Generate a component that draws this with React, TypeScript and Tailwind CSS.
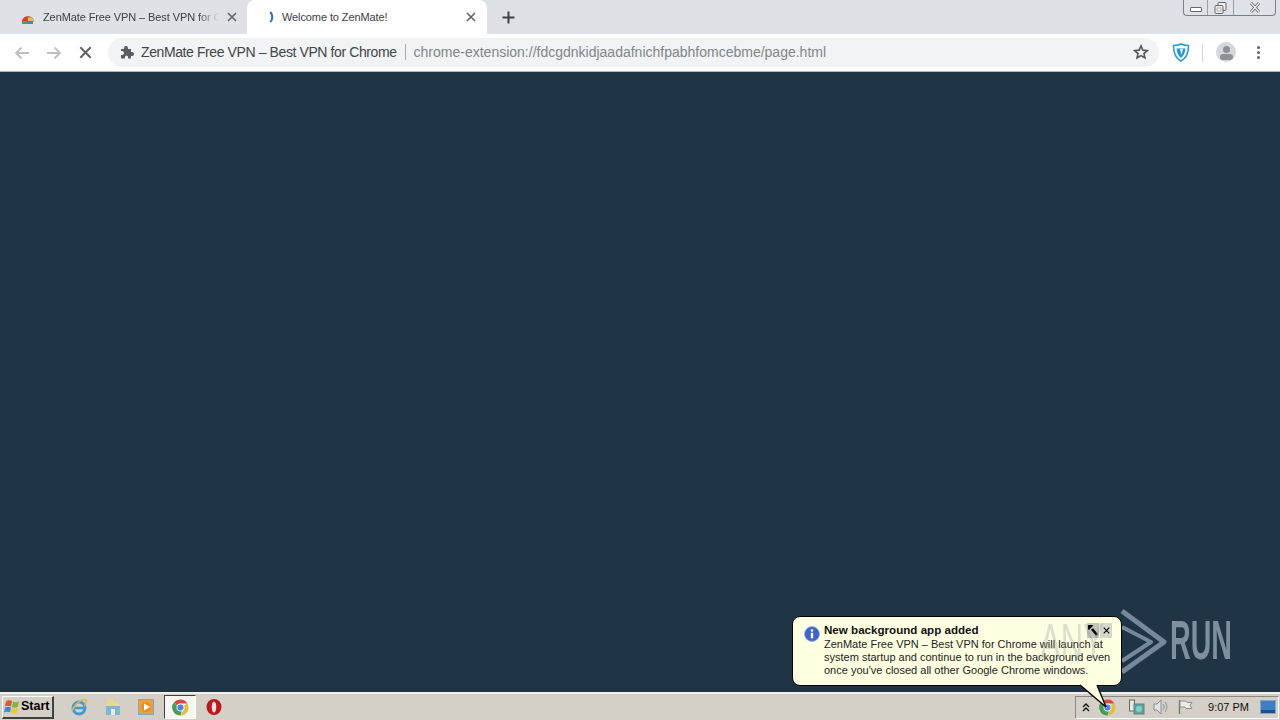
import React from "react";

const font = { fontFamily: '"Liberation Sans", Arial, sans-serif' };

function ChromeLogo({ size = 17 }: { size?: number }) {
  return (
    <svg width={size} height={size} viewBox="0 0 16 16">
      <path d="M8 0.5a7.5 7.5 0 0 1 6.5 3.75H8a3.75 3.75 0 0 0-3.4 2.2L2.2 2.9A7.5 7.5 0 0 1 8 .5z" fill="#d9483b" />
      <path d="M14.5 4.25A7.5 7.5 0 0 1 8 15.5l3.2-5.6A3.75 3.75 0 0 0 11.2 6z" fill="#e8bb3a" />
      <path d="M8 15.5A7.5 7.5 0 0 1 2.2 2.9l3.2 5.6a3.75 3.75 0 0 0 3.9 3.1z" fill="#4a9a58" />
      <circle cx="8" cy="8" r="3.7" fill="#e8eef5" />
      <circle cx="8" cy="8" r="2.8" fill="#4a86e0" />
    </svg>
  );
}

function CloseX({ cls = "#5f6368", size = 10 }: { cls?: string; size?: number }) {
  return (
    <svg width={size} height={size} viewBox="0 0 10 10">
      <path d="M1 1l8 8M9 1l-8 8" stroke={cls} strokeWidth="1.6" fill="none" />
    </svg>
  );
}

function Tabs() {
  return (
    <div className="h-[34px] bg-[#dee1e6] flex items-end relative shrink-0">
      <div className="w-[247px] h-[34px] flex items-center pl-[21px] pr-[10px] shrink-0">
        <svg width="14" height="14" viewBox="0 0 14 14" className="shrink-0 mt-[1px]">
          <path d="M1 11a6 6 0 0 1 12 0z" fill="#c9584a" />
          <path d="M7 11V6.5a4.5 4.5 0 0 1 6 4.5z" fill="#e2c04a" />
          <path d="M1 11a6 6 0 0 1 4-5.2L7 11z" fill="#d23f31" />
          <rect x="1" y="10" width="5" height="3" fill="#5a9a5c" />
          <rect x="6" y="10" width="6" height="3" fill="#4a7fd6" />
        </svg>
        <span className="ml-[8px] text-[11px] tracking-[-0.1px] text-[#3c4043] whitespace-nowrap overflow-hidden w-[176px]" style={{ WebkitMaskImage: "linear-gradient(to right, #000 88%, transparent)" }}>
          ZenMate Free VPN – Best VPN for Chrome
        </span>
        <span className="ml-auto"><CloseX /></span>
      </div>
      <div className="w-[240px] h-[34px] bg-white rounded-t-[8px] flex items-center pl-[21px] pr-[11px] shrink-0">
        <svg width="8" height="12" viewBox="0 0 8 12" className="shrink-0">
          <path d="M2 1c3 2 3 8 0 10" stroke="#3a6fc4" strokeWidth="2" fill="none" />
        </svg>
        <span className="ml-[6px] text-[11px] tracking-[-0.1px] text-[#3c4043] whitespace-nowrap">Welcome to ZenMate!</span>
        <span className="ml-auto"><CloseX /></span>
      </div>
      <div className="ml-[15px] h-[34px] flex items-center">
        <svg width="13" height="13" viewBox="0 0 13 13">
          <path d="M6.5 0.5v12M0.5 6.5h12" stroke="#3c4043" strokeWidth="2" fill="none" />
        </svg>
      </div>
      <div className="absolute top-0 right-[4px] w-[93px] h-[16px] border border-t-0 border-[#7b8087] rounded-b-[4px] flex bg-[#dfe2e7]">
        <div className="w-[24px] flex items-center justify-center border-r border-[#9a9ea5]">
          <div className="w-[12px] h-[5px] mt-[4px] border border-[#666] rounded-[1px] bg-white" />
        </div>
        <div className="w-[26px] flex items-center justify-center border-r border-[#9a9ea5]">
          <svg width="13" height="12" viewBox="0 0 13 12">
            <rect x="4" y="0.5" width="8" height="8" fill="#eee" stroke="#666" rx="1" />
            <rect x="1" y="3.5" width="8" height="8" fill="#eee" stroke="#666" rx="1" />
            <rect x="3" y="6" width="4" height="3" fill="#fff" stroke="#888" strokeWidth="0.6" />
          </svg>
        </div>
        <div className="flex-1 flex items-center justify-center">
          <svg width="14" height="11" viewBox="0 0 14 11">
            <path d="M3 1l8 9M11 1l-8 9" stroke="#666" strokeWidth="2.8" fill="none" />
            <path d="M3 1l8 9M11 1l-8 9" stroke="#f0f0f0" strokeWidth="1.2" fill="none" />
          </svg>
        </div>
      </div>
    </div>
  );
}

function Toolbar() {
  return (
    <div className="h-[38px] bg-white border-b border-[#aeb4b9] flex items-center shrink-0">
      <div className="w-[108px] flex items-center shrink-0 pl-[14px]">
        <svg width="16" height="14" viewBox="0 0 16 14">
          <path d="M15 7H2M7.5 1.5L2 7l5.5 5.5" stroke="#bcc0c4" strokeWidth="1.8" fill="none" />
        </svg>
        <svg width="16" height="14" viewBox="0 0 16 14" className="ml-[16px]">
          <path d="M1 7h13M8.5 1.5L14 7l-5.5 5.5" stroke="#bcc0c4" strokeWidth="1.8" fill="none" />
        </svg>
        <span className="ml-[17px] flex"><CloseX cls="#5f6368" size={13} /></span>
      </div>
      <div className="w-[1051px] h-[29px] rounded-full bg-[#f1f3f4] flex items-center pl-[12px] pr-[10px] shrink-0 -mt-[1px]">
        <svg width="14" height="14" viewBox="0 0 14 14" className="shrink-0">
          <path d="M1 4h3V3a2 2 0 0 1 4 0v1h3v3h1a2 2 0 0 1 0 4h-1v2.500H8V12a1.500 1.500 0 0 0-3 0v1.500H1V10h1a2 2 0 0 0 0-4H1z" fill="#5a5e62" />
        </svg>
        <span className="ml-[7px] text-[14px] tracking-[-0.4px] text-[#41464b] whitespace-nowrap">ZenMate Free VPN – Best VPN for Chrome</span>
        <span className="ml-[8px] w-px h-[16px] bg-[#a8acb0]" />
        <span className="ml-[8px] text-[14px] text-[#80868b] whitespace-nowrap">chrome-extension://fdcgdnkidjaadafnichfpabhfomcebme/page.html</span>
        <svg width="16" height="16" viewBox="0 0 24 24" className="ml-auto shrink-0">
          <path d="M12 3l2.700 6.200 6.800.6-5.100 4.500 1.500 6.600L12 17.400l-5.900 3.500 1.500-6.600L2.500 9.800l6.800-.6z" fill="none" stroke="#50555a" strokeWidth="2.400" />
        </svg>
      </div>
      <svg width="18" height="19" viewBox="0 0 18 19" className="ml-[13px] shrink-0 -mt-[1px]">
        <path d="M1.500 2.500C5 2.500 7 2 9 1c2 1 4 1.500 7.500 1.500C16.500 10 14 15.500 9 18 4 15.500 1.500 10 1.500 2.500z" fill="#fff" stroke="#2b9bd6" strokeWidth="1.600" />
        <path d="M4.500 5.500h9C13 10 11.500 13 9 15 6.500 13 5 10 4.500 5.500z" fill="#1f97d4" />
        <path d="M8 6h3l-1.500 6z" fill="#fff" />
      </svg>
      <span className="ml-[12px] w-px h-[18px] bg-[#d4d6d9]" />
      <div className="ml-[13px] w-[20px] h-[20px] rounded-full bg-[#d5d7da] overflow-hidden flex flex-col items-center shrink-0 -mt-[1px]">
        <span className="mt-[4px] w-[7px] h-[7px] rounded-full bg-[#8d9195]" />
        <span className="mt-[1px] w-[13px] h-[6px] rounded-full bg-[#8d9195]" />
      </div>
      <div className="ml-[21px] flex flex-col gap-[2px] shrink-0 -mt-[1px]">
        <span className="w-[3px] h-[3px] bg-[#5f6368] rounded-full" />
        <span className="w-[3px] h-[3px] bg-[#5f6368] rounded-full" />
        <span className="w-[3px] h-[3px] bg-[#5f6368] rounded-full" />
      </div>
    </div>
  );
}

function Balloon() {
  return (
    <div className="absolute left-[792px] top-[616px] w-[330px] h-[70px] bg-[#ffffe1] border border-black rounded-[8px] text-[#111]">
      <svg width="16" height="16" viewBox="0 0 16 16" className="absolute left-[11px] top-[9px]">
        <circle cx="8" cy="8" r="7.500" fill="#3d62c8" stroke="#9fb2e0" strokeWidth="1" />
        <circle cx="8" cy="4.500" r="1.300" fill="#fff" />
        <rect x="6.800" y="6.800" width="2.400" height="5.600" fill="#fff" />
      </svg>
      <div className="absolute left-[31px] top-[5px] text-[11.600px] font-bold leading-[15px] whitespace-nowrap">New background app added</div>
      <div className="absolute left-[31px] top-[21px] text-[11px] leading-[13px] whitespace-nowrap text-[#222]">
        <div>ZenMate Free VPN – Best VPN for Chrome will launch at</div>
        <div>system startup and continue to run in the background even</div>
        <div>once you've closed all other Google Chrome windows.</div>
      </div>
      <div className="absolute left-[294px] top-[6px] w-[12px] h-[15px] bg-[#c4c4b8] flex items-center justify-center">
        <svg width="11" height="11" viewBox="0 0 11 11">
          <path d="M4 4l5 6" stroke="#000" strokeWidth="2.600" fill="none" />
          <path d="M5 0.800A3 3 0 1 0 1 5z" fill="#000" />
        </svg>
      </div>
      <div className="absolute left-[307px] top-[6px] w-[12px] h-[15px] bg-[#d8d8ca] flex items-center justify-center">
        <CloseX cls="#000" size={7} />
      </div>
      <svg width="28" height="24" viewBox="0 0 28 24" className="absolute left-[286px] top-[67px]">
        <path d="M0 0l28 24-10-24z" fill="#ffffe1" />
        <path d="M1 1l26 22" stroke="#000" strokeWidth="1.400" fill="none" />
        <path d="M18 1l9 22" stroke="#000" strokeWidth="1.400" fill="none" />
      </svg>
    </div>
  );
}

function Watermark() {
  return (
    <>
      <svg width="50" height="66" viewBox="0 0 50 66" className="absolute left-[1120px] top-[609px] pointer-events-none">
        <path d="M2 2l42 31L2 63" fill="none" stroke="#76889a" strokeWidth="5" strokeLinejoin="round" />
        <path d="M2 18l29 15L2 52" fill="none" stroke="#76889a" strokeWidth="4" strokeLinejoin="round" />
      </svg>
      <span className="absolute left-[1170px] top-[613px] text-[55px] leading-[55px] font-bold text-[#7e909f] scale-x-[0.52] origin-left whitespace-nowrap pointer-events-none">RUN</span>
    </>
  );
}

function Taskbar() {
  return (
    <div className="h-[28px] bg-[#d4d0c8] border-t-2 border-[#f1efe9] flex items-center shrink-0 relative">
      <div className="ml-[2px] w-[52px] h-[23px] bg-[#d4d0c8] border-t border-l border-white border-r-2 border-b-2 border-r-[#404040] border-b-[#404040] flex items-center pl-[1px]">
        <svg width="16" height="16" viewBox="0 0 16 15" className="shrink-0">
          <path d="M2 2c2-1.500 4-1.500 6-.5L7 7C5 6 3 6 1 7z" fill="#e2552b" />
          <path d="M9 2c2 1 4 1 6-.5L14 7c-2 1.500-4 1.500-6 .5z" fill="#7fb63c" />
          <path d="M1 8c2-1 4-1 6 0l-1 5c-2-1-4-1-6 0z" fill="#3d87d6" />
          <path d="M8 8.500c2 1 4 1 6-.5l-1 5c-2 1.500-4 1.500-6 .5z" fill="#f4c42e" />
        </svg>
        <span className="ml-[1px] text-[12.500px] font-bold text-black leading-none">Start</span>
      </div>
      <svg width="18" height="18" viewBox="0 0 18 18" className="ml-[16px] shrink-0">
        <circle cx="9" cy="10" r="6" fill="none" stroke="#3f9bd8" strokeWidth="3" />
        <path d="M3 10h12" stroke="#3f9bd8" strokeWidth="2.500" />
        <path d="M2 13C5 5 12 1 16 2c1 1 0 4-2 6" fill="none" stroke="#e0b840" strokeWidth="1.500" />
      </svg>
      <svg width="16" height="18" viewBox="0 0 16 18" className="ml-[17px] shrink-0">
        <path d="M2 4l1-3h5l1 3h5v5H2z" fill="#e9d890" />
        <rect x="1" y="8" width="14" height="9" fill="#7fb6d8" />
        <rect x="6" y="11" width="4" height="6" fill="#e4f0f6" />
      </svg>
      <svg width="16" height="16" viewBox="0 0 16 16" className="ml-[17px] shrink-0">
        <rect x="0.500" y="0.500" width="15" height="15" fill="#eaa13a" stroke="#7ea8c8" />
        <circle cx="8" cy="8" r="5" fill="#f08a1f" />
        <path d="M6 4.500l6 3.500-6 3.500z" fill="#fff" />
      </svg>
      <div className="ml-[10px] w-[32px] h-[24px] bg-[#f7f6f3] border-t border-l border-[#404040] border-r border-b border-r-white border-b-white flex items-center justify-center shrink-0">
        <ChromeLogo />
      </div>
      <svg width="16" height="18" viewBox="0 0 16 18" className="ml-[10px] shrink-0">
        <ellipse cx="8" cy="9" rx="7.500" ry="8" fill="#b81a1f" />
        <ellipse cx="8" cy="9" rx="2.300" ry="5.500" fill="#f6e0e0" />
      </svg>
      <div className="ml-auto mr-[1px] w-[204px] h-[23px] border border-t-[#8a8880] border-l-[#8a8880] border-r-white border-b-white flex items-center relative">
        <svg width="8" height="9" viewBox="0 0 8 9" className="ml-[6px] shrink-0">
          <path d="M1 4l3-3 3 3M1 8l3-3 3 3" stroke="#111" strokeWidth="1.300" fill="none" />
        </svg>
        <span className="ml-[9px] flex shrink-0"><ChromeLogo /></span>
        <svg width="16" height="16" viewBox="0 0 16 16" className="ml-[13px] shrink-0">
          <rect x="0.500" y="1" width="5" height="11" fill="#e8e8e0" stroke="#666" />
          <rect x="5" y="5" width="10" height="10" fill="#56a7a3" stroke="#777" />
          <circle cx="10" cy="10" r="3" fill="#7fd0cc" />
        </svg>
        <svg width="15" height="16" viewBox="0 0 15 16" className="ml-[8px] shrink-0">
          <path d="M1 5h3l4-4v14l-4-4H1z" fill="#dfe3e6" stroke="#8a8e92" />
          <path d="M10 5c1.500 2 1.500 4 0 6M12 3c2.500 3 2.500 7 0 10" stroke="#8a8e92" fill="none" />
        </svg>
        <svg width="15" height="16" viewBox="0 0 15 16" className="ml-[10px] shrink-0">
          <path d="M1.500 1v14" stroke="#777" strokeWidth="1.400" />
          <path d="M2 2h6l1 1.500h5l-2 3 2 3H8L7 8H2z" fill="#ecece8" stroke="#8a8e92" />
        </svg>
        <span className="ml-[12px] w-[44px] mt-[1px] text-right text-[11px] text-[#111] whitespace-nowrap">9:07 PM</span>
        <svg width="16" height="14" viewBox="0 0 16 14" className="ml-[11px] shrink-0">
          <rect x="0.500" y="0.500" width="15" height="13" fill="#3d7fc4" stroke="#8aa5be" />
          <path d="M1 10h14v3H1z" fill="#1e4f8a" />
        </svg>
      </div>
    </div>
  );
}

export default function App() {
  return (
    <div className="w-[1280px] h-[720px] flex flex-col overflow-hidden relative" style={font}>
      <Tabs />
      <Toolbar />
      <main className="flex-1 bg-[#1f3445]" />
      <Taskbar />
      <Watermark />
      <Balloon />
      <span className="absolute left-[1040px] top-[617px] text-[50px] leading-none text-[#8c98a0] opacity-30 scale-x-[0.62] origin-left whitespace-nowrap pointer-events-none">ANY</span>
    </div>
  );
}
